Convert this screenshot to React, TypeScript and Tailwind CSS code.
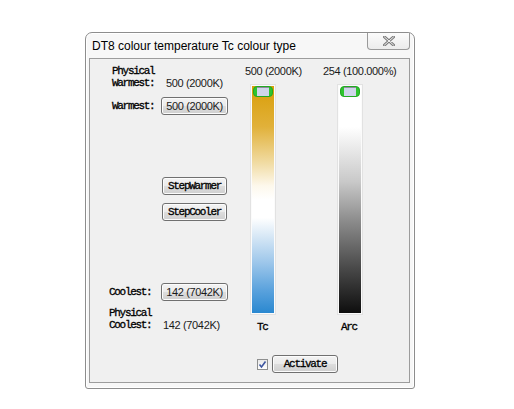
import React from 'react';

const mono = "font-['Liberation_Mono',monospace] text-[11px] tracking-[-1.3px] leading-[12px] text-black [-webkit-text-stroke:0.3px_#000]";
const sans = "font-['Liberation_Sans',sans-serif] text-[11px] tracking-[-0.35px] leading-[12px] text-[#1a1a1a]";

const btn =
  'flex items-center justify-center h-[18px] rounded-[3px] border border-[#707070] bg-[linear-gradient(to_bottom,#f3f3f3_0%,#ebebeb_48%,#dddddd_52%,#cfcfcf_100%)] shadow-[inset_0_0_0_1px_#fcfcfc]';

const Thumb: React.FC = () => (
  <div className="h-[11px] mx-[1px] rounded-[4px] bg-[#2ec42e] px-[3px] flex border border-[#23a823]">
    <div className="flex-1 bg-[#cfd5ea] border-t border-[#8c8c9c]" />
  </div>
);

interface BarProps {
  gradient: string;
}

const Bar: React.FC<BarProps> = ({ gradient }) => (
  <div className={`w-[24px] h-[229px] border border-[#fbfbfb] shadow-[0_0_0_1px_#e2e2e2] ${gradient}`}>
    <Thumb />
  </div>
);

export default function App() {
  return (
    <div className="w-[514px] h-[409px] bg-white pt-[32px] pl-[85px]">
      <div className="w-[330px] h-[357px] rounded-t-[7px] rounded-b-[3px] border border-[#8d8d8d] bg-[#f7f7f7] shadow-[inset_0_0_0_1px_#ffffff] flex flex-col">
        {/* title bar */}
        <div className="h-[25px] flex items-start">
          <div className="ml-[6px] mt-[5px] font-['Liberation_Sans',sans-serif] text-[12px] leading-[16px] text-black">
            DT8 colour temperature Tc colour type
          </div>
          <div className="ml-auto mr-[4px] w-[43px] h-[17px] rounded-b-[4px] border border-t-0 border-[#9a9a9a] bg-[linear-gradient(to_bottom,#fbfbfb,#ececec)] flex items-center justify-center">
            <svg width="12" height="10" viewBox="0 0 12 10">
              <path d="M1.5 1 L10.5 9 M10.5 1 L1.5 9" stroke="#7d7d7d" strokeWidth="3" strokeLinecap="round" />
              <path d="M1.5 1 L10.5 9 M10.5 1 L1.5 9" stroke="#f2f2f2" strokeWidth="1" strokeLinecap="round" />
            </svg>
          </div>
        </div>

        {/* client area */}
        <div className="ml-[3px] mr-[4px] h-[325px] border border-[#9c9c9c] bg-[#f0f0f0] flex flex-col">
          <div className="flex h-[280px]">
            {/* left column */}
            <div className="w-[155px] flex flex-col">
              <div className={`ml-[22px] mt-[6px] ${mono}`}>Physical</div>
              <div className="ml-[22px] flex">
                <span className={`w-[54px] ${mono}`}>Warmest:</span>
                <span className={sans}>500 (2000K)</span>
              </div>

              <div className="ml-[22px] mt-[8px] flex items-center">
                <span className={`w-[49px] ${mono}`}>Warmest:</span>
                <div className={`w-[67px] ${btn} ${sans}`}>500 (2000K)</div>
              </div>

              <div className={`ml-[72px] mt-[62px] w-[65px] ${btn} ${mono}`}>StepWarmer</div>
              <div className={`ml-[72px] mt-[8px] w-[65px] ${btn} ${mono}`}>StepCooler</div>

              <div className="ml-[19px] mt-[62px] flex items-center">
                <span className={`w-[52px] ${mono}`}>Coolest:</span>
                <div className={`w-[67px] ${btn} ${sans}`}>142 (7042K)</div>
              </div>

              <div className={`ml-[19px] mt-[6px] ${mono}`}>Physical</div>
              <div className="ml-[19px] flex">
                <span className={`w-[54px] ${mono}`}>Coolest:</span>
                <span className={sans}>142 (7042K)</span>
              </div>
            </div>

            {/* Tc column */}
            <div className="w-[78px] flex flex-col">
              <div className={`mt-[6px] ${sans}`}>500 (2000K)</div>
              <div className="ml-[6px] mt-[8px]">
                <Bar gradient="bg-[linear-gradient(to_bottom,#d99e08_0%,#e1b13a_18%,#f1dca4_34%,#fdf8ec_44%,#ffffff_50%,#ffffff_58%,#d8e8f6_66%,#9cc6ea_78%,#5aa2dd_90%,#2a88d0_100%)]" />
              </div>
              <div className={`ml-[12px] mt-[7px] ${mono}`}>Tc</div>
            </div>

            {/* Arc column */}
            <div className="flex-1 flex flex-col">
              <div className={`mt-[6px] ${sans}`}>254 (100.000%)</div>
              <div className="ml-[15px] mt-[8px]">
                <Bar gradient="bg-[linear-gradient(to_bottom,#ffffff_0%,#ffffff_18%,#c9c9c9_42%,#8a8a8a_60%,#4a4a4a_80%,#0e0e0e_100%)]" />
              </div>
              <div className={`ml-[18px] mt-[7px] ${mono}`}>Arc</div>
            </div>
          </div>

          {/* bottom row */}
          <div className="mt-[16px] ml-[167px] flex items-center gap-[4px] h-[18px]">
            <div className="w-[11px] h-[11px] border border-[#8e8f8f] bg-[linear-gradient(to_bottom,#e9e9e9,#ffffff)] flex items-center justify-center">
              <svg width="9" height="9" viewBox="0 0 9 9">
                <path d="M1.5 4.5 L3.5 7 L7.5 1.5" fill="none" stroke="#3e56a0" strokeWidth="1.6" />
              </svg>
            </div>
            <div className={`w-[66px] ${btn} ${mono}`}>Activate</div>
          </div>
        </div>
      </div>
    </div>
  );
}
